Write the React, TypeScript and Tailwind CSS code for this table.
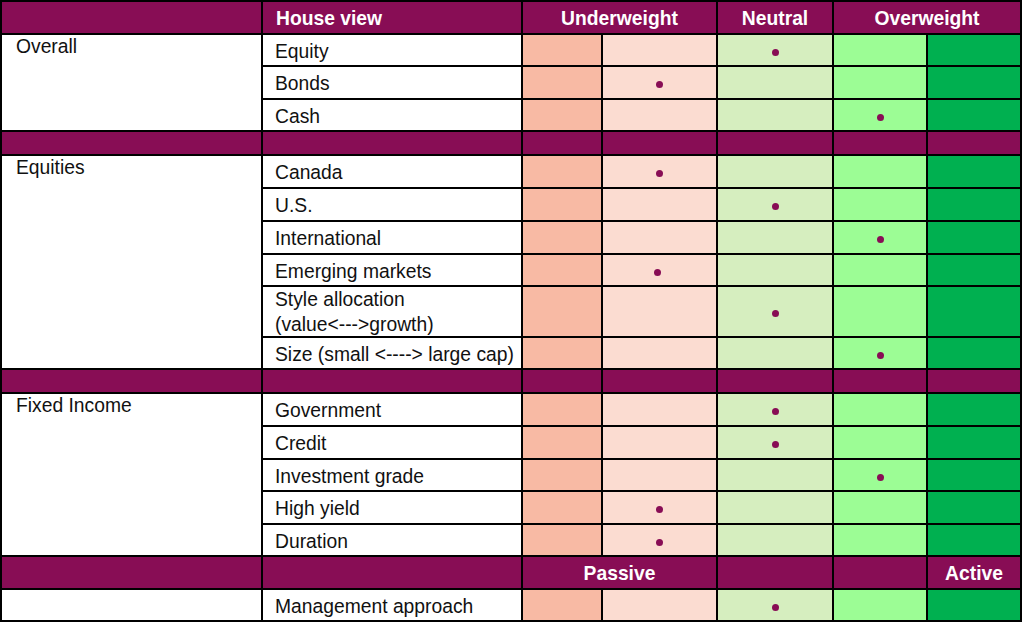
import React from "react";

const PURPLE = "bg-[#880d55]";
const COLORS = ["bg-[#f8baa4]", "bg-[#fbdcd1]", "bg-[#d6eebf]", "bg-[#9cfd95]", "bg-[#00b050]"];

type Row = { label: string; dot: number; multiline?: boolean; shift?: boolean };

const Dot = ({ shift }: { shift?: boolean }) => (
  <div className={`w-[7px] h-[7px] rounded-full bg-[#880d55] mt-[4px] ${shift ? "mr-[5px]" : ""}`} />
);

function ColorCells({ dot, keyPrefix, shift }: { dot: number; keyPrefix: string; shift?: boolean }) {
  return (
    <>
      {COLORS.map((c, i) => (
        <div key={keyPrefix + i} className={`${c} flex items-center justify-center`}>
          {dot === i ? <Dot shift={shift} /> : null}
        </div>
      ))}
    </>
  );
}

function Separator({ k }: { k: string }) {
  return (
    <>
      {Array.from({ length: 7 }).map((_, i) => (
        <div key={k + i} className={PURPLE} />
      ))}
    </>
  );
}

const sections: { name: string; span: string; rows: Row[] }[] = [
  {
    name: "Overall",
    span: "row-span-3",
    rows: [
      { label: "Equity", dot: 2 },
      { label: "Bonds", dot: 1 },
      { label: "Cash", dot: 3 },
    ],
  },
  {
    name: "Equities",
    span: "row-span-6",
    rows: [
      { label: "Canada", dot: 1 },
      { label: "U.S.", dot: 2 },
      { label: "International", dot: 3 },
      { label: "Emerging markets", dot: 1, shift: true },
      { label: "Style allocation|(value<--->growth)", dot: 2, multiline: true },
      { label: "Size (small <----> large cap)", dot: 3 },
    ],
  },
  {
    name: "Fixed Income",
    span: "row-span-5",
    rows: [
      { label: "Government", dot: 2 },
      { label: "Credit", dot: 2 },
      { label: "Investment grade", dot: 3 },
      { label: "High yield", dot: 1 },
      { label: "Duration", dot: 1 },
    ],
  },
];

export default function App() {
  const cells: React.ReactNode[] = [];
  cells.push(<div key="h0" className={PURPLE} />);
  cells.push(
    <div key="h1" className={`${PURPLE} flex items-center pl-[13px] pt-[2px] font-bold text-white`}>
      House view
    </div>
  );
  cells.push(
    <div key="h2" className={`${PURPLE} col-span-2 flex items-center justify-center pt-[2px] font-bold text-white`}>
      Underweight
    </div>
  );
  cells.push(
    <div key="h3" className={`${PURPLE} flex items-center justify-center pt-[2px] font-bold text-white`}>
      Neutral
    </div>
  );
  cells.push(
    <div key="h4" className={`${PURPLE} col-span-2 flex items-center justify-center pt-[2px] font-bold text-white`}>
      Overweight
    </div>
  );

  sections.forEach((s, si) => {
    s.rows.forEach((r, ri) => {
      if (ri === 0) {
        cells.push(
          <div key={`s${si}`} className={`${s.span} bg-white pl-[14px] pt-[1px]`}>
            {s.name}
          </div>
        );
      }
      if (r.multiline) {
        const [a, b] = r.label.split("|");
        cells.push(
          <div key={`l${si}-${ri}`} className="bg-white pl-[12px] leading-[25px]">
            <div>{a}</div>
            <div>{b}</div>
          </div>
        );
      } else {
        cells.push(
          <div key={`l${si}-${ri}`} className="bg-white flex items-center pl-[12px] pt-[3px]">
            {r.label}
          </div>
        );
      }
      cells.push(<ColorCells key={`c${si}-${ri}`} dot={r.dot} keyPrefix={`c${si}-${ri}-`} shift={r.shift} />);
    });
    if (si < 2) {
      cells.push(<Separator key={`sep${si}`} k={`sep${si}-`} />);
    }
  });

  cells.push(<div key="p0" className={PURPLE} />);
  cells.push(<div key="p1" className={PURPLE} />);
  cells.push(
    <div key="p2" className={`${PURPLE} col-span-2 flex items-center justify-center pt-[2px] font-bold text-white`}>
      Passive
    </div>
  );
  cells.push(<div key="p3" className={PURPLE} />);
  cells.push(<div key="p4" className={PURPLE} />);
  cells.push(
    <div key="p5" className={`${PURPLE} flex items-center justify-center pt-[2px] font-bold text-white`}>
      Active
    </div>
  );
  cells.push(<div key="m0" className="bg-white" />);
  cells.push(
    <div key="m1" className="bg-white flex items-center pl-[12px] pt-[3px]">
      Management approach
    </div>
  );
  cells.push(<ColorCells key="mc" dot={2} keyPrefix="mc-" />);

  return (
    <div className="w-[1024px] h-[629px] bg-white overflow-hidden font-['Liberation_Sans',Arial,sans-serif] text-[19.3px] leading-[22px] text-[#111]">
      <div className="grid w-fit bg-black gap-[2px] p-[2px] grid-cols-[259px_258px_78px_113px_114px_92px_92px] grid-rows-[31px_30px_31px_30px_22px_31px_31px_31px_30px_49px_30px_22px_31px_31px_30px_31px_30px_31px_30px]">
        {cells}
      </div>
    </div>
  );
}
